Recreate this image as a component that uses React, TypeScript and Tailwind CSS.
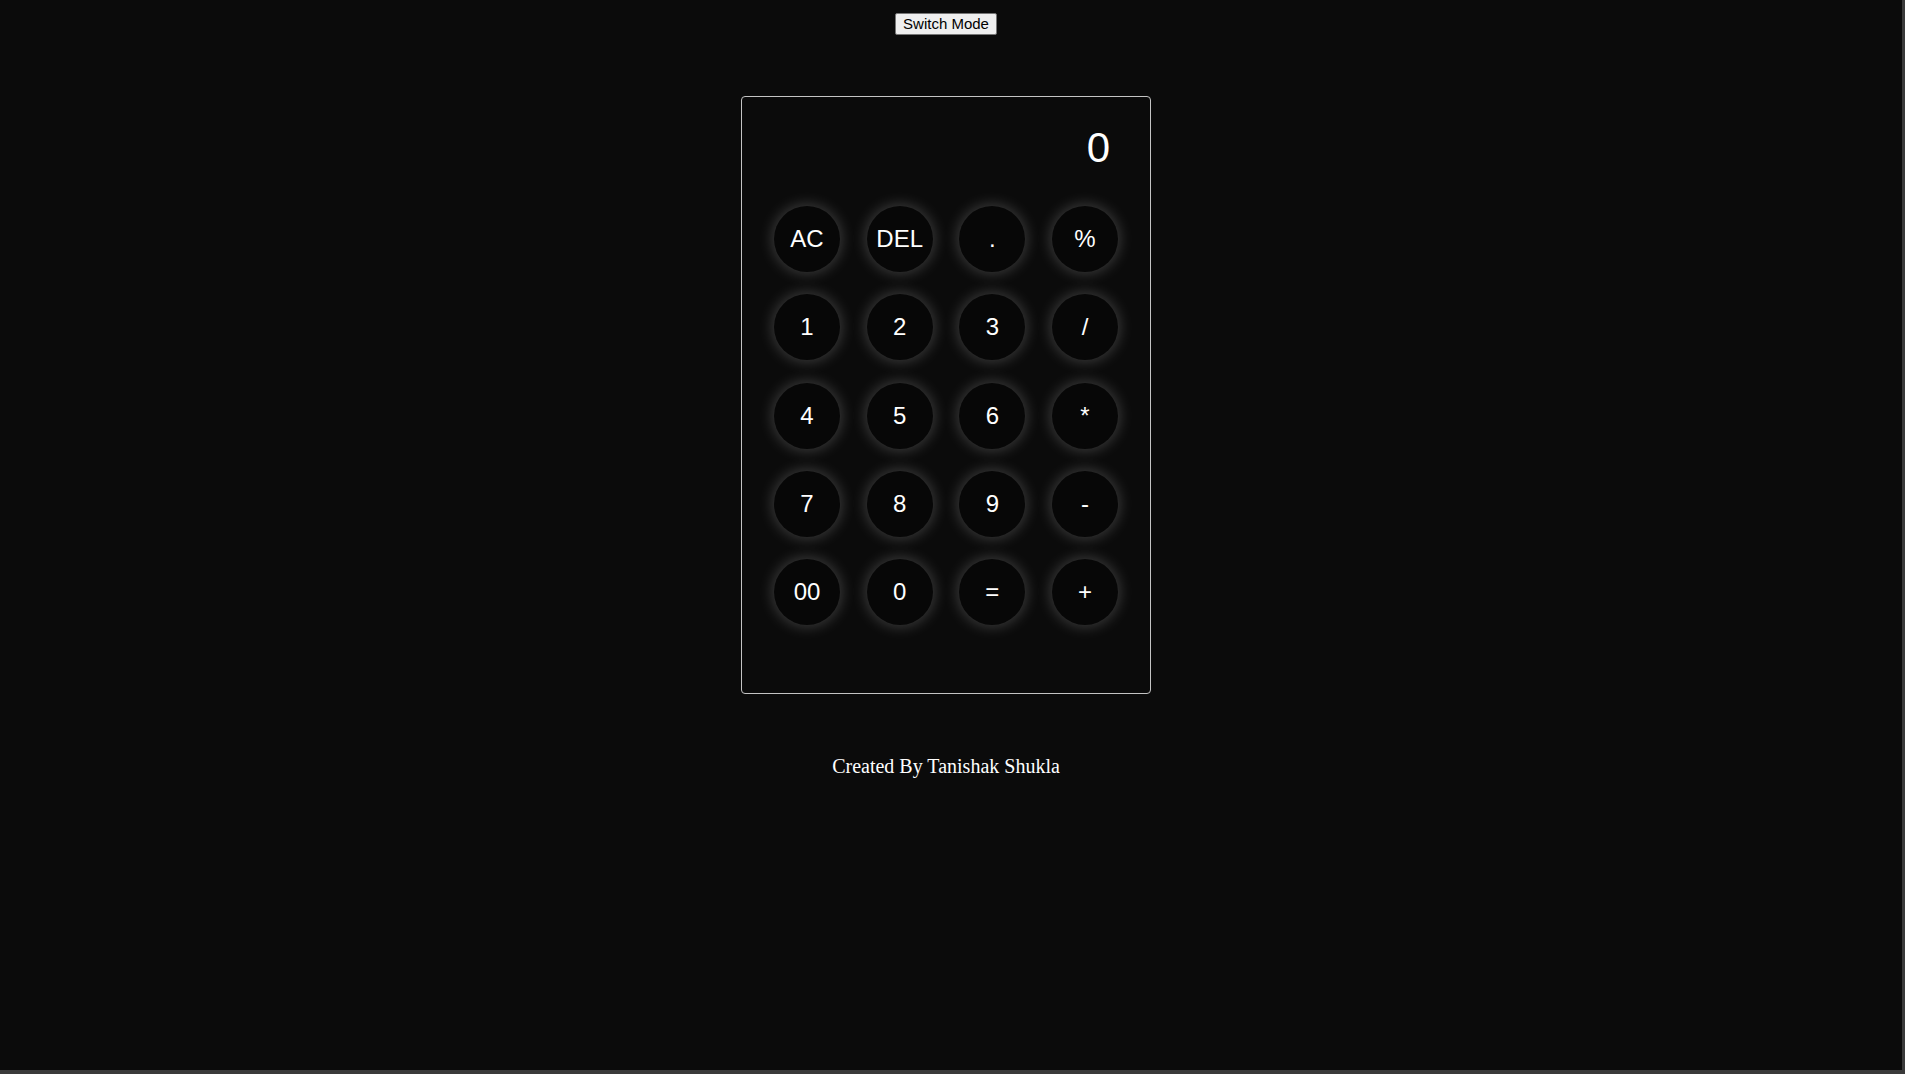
const keys = [
  "AC", "DEL", ".", "%",
  "1", "2", "3", "/",
  "4", "5", "6", "*",
  "7", "8", "9", "-",
  "00", "0", "=", "+",
];

const CalcButton = ({ label }: { label: string }) => (
  <button className="flex h-[66px] w-[66px] items-center justify-center rounded-full bg-[#070707] text-[24px] text-white shadow-[0_0_16px_rgba(255,255,255,0.26)] font-['Liberation_Sans',Arial,sans-serif]">
    {label}
  </button>
);

export default function App() {
  return (
    <div className="box-border h-[1074px] w-[1905px] overflow-hidden border-b-[4px] border-r-[3px] border-[#3a3a3a] bg-[#0b0b0b]">
      <div className="flex flex-col items-center pr-[10px]">
        <button className="mt-[13px] h-[22px] rounded-[2px] border border-[#767676] bg-[#efefef] px-[7px] text-[15px] leading-[18px] text-black font-['Liberation_Sans',Arial,sans-serif]">
          Switch Mode
        </button>

        <div className="mt-[61px] box-border h-[598px] w-[410px] rounded-[4px] border border-[#c4c4c4]">
          <div className="pr-[40px] pt-[27px] text-right text-[42px] leading-[48px] text-white font-['Liberation_Sans',Arial,sans-serif]">
            0
          </div>
          <div className="mt-[34px] grid grid-cols-4 gap-x-[26.67px] gap-y-[22.3px] px-[32px]">
            {keys.map((k) => (
              <CalcButton key={k} label={k} />
            ))}
          </div>
        </div>

        <p className="mt-[61px] text-[20px] leading-[23px] text-white font-['Liberation_Serif','Times_New_Roman',serif]">
          Created By Tanishak Shukla
        </p>
      </div>
    </div>
  );
}
